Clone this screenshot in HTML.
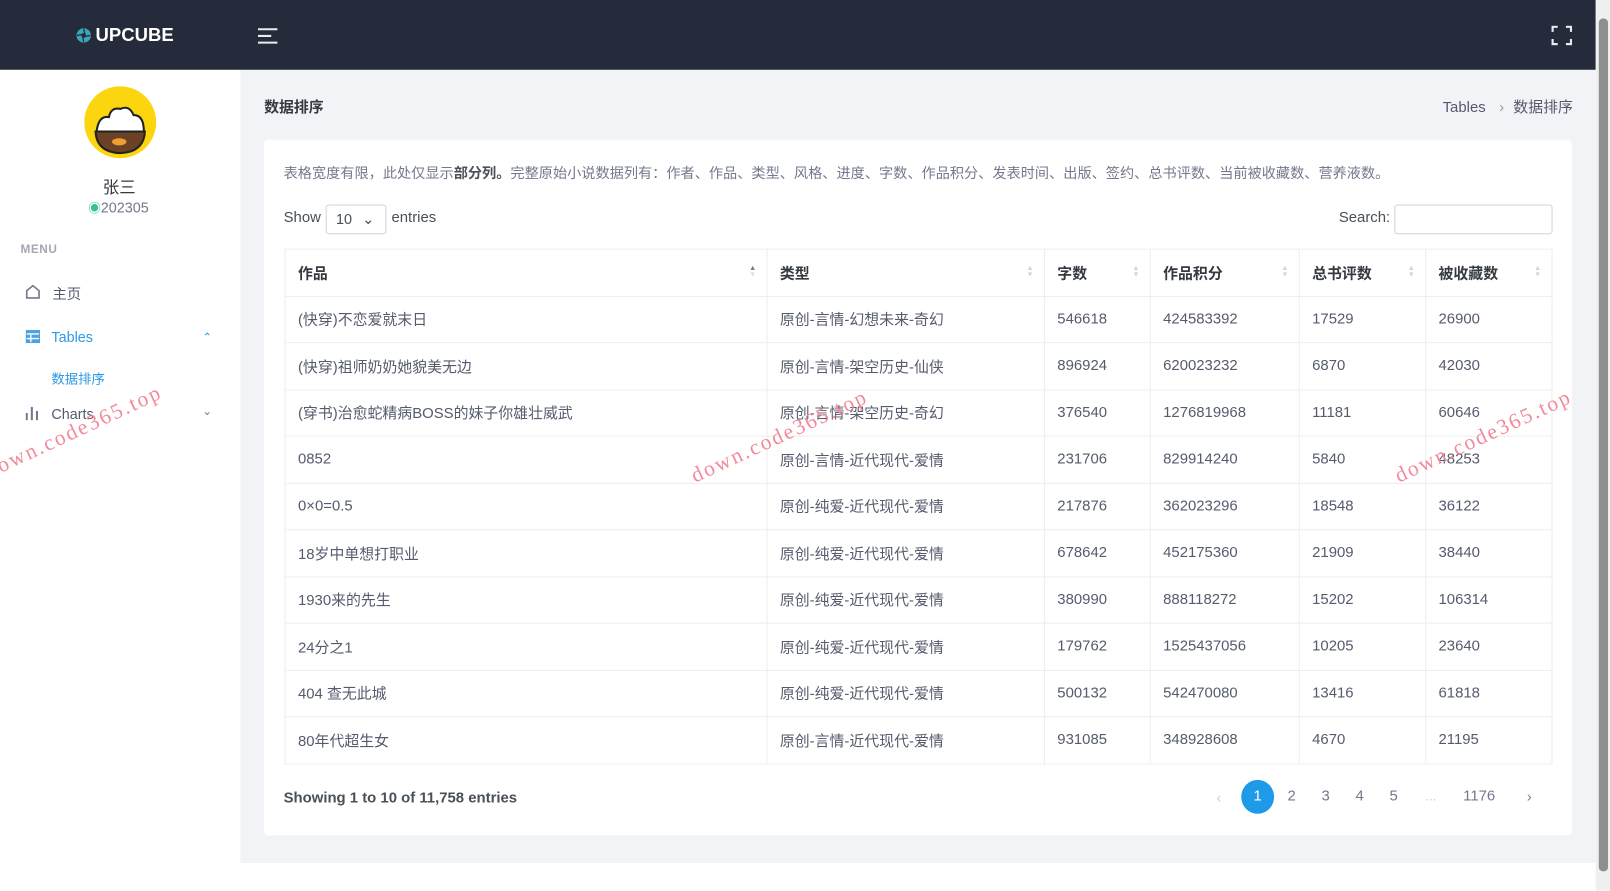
<!DOCTYPE html>
<html><head><meta charset="utf-8"><style>
*{box-sizing:border-box;margin:0;padding:0}
body{width:1610px;height:867px;background:#fff;font-family:"Liberation Sans","Noto Sans CJK SC",sans-serif;overflow:hidden;color:#495057}
#w{position:absolute;left:0;top:0;width:1567px;height:844px;transform:scale(1.0275);transform-origin:0 0}
.hdr{position:absolute;left:0;top:0;width:1553px;height:68px;background:#252b3b}
.side{position:absolute;left:0;top:68px;width:234px;height:799px;background:#fff}
.main{position:absolute;left:234px;top:68px;width:1319px;height:772px;background:#f1f3f7}
.sb{position:absolute;left:1553px;top:0;width:14px;height:867px;background:#f0f0f0}
.sb div{position:absolute;left:3px;top:18px;width:9px;height:830px;background:#8f8f8f;border-radius:4px}
.card{position:absolute;left:257px;top:136px;width:1273px;height:677px;background:#fff;border-radius:4px}
table{position:absolute;left:277px;top:242px;border-collapse:collapse;font-size:14.5px}
td,th{border:1px solid #eceef1;height:45.5px;padding:0 12px;text-align:left;color:#555b6d;font-weight:normal;white-space:nowrap}
th{font-weight:bold;position:relative;color:#343a40}
th span{position:absolute;right:10px;top:16px;font-size:7px;color:#ced4da;line-height:6px}
.t{position:absolute;white-space:nowrap}
.wm{position:absolute;color:#f28a9a;font-family:"Liberation Serif",serif;font-size:21px;transform:rotate(-25deg);letter-spacing:2px;white-space:nowrap}
</style></head><body><div id="w">
<div class="hdr">
 <svg style="position:absolute;left:74px;top:27px" width="15" height="15" viewBox="0 0 16 16"><circle cx="8" cy="8" r="7.5" fill="#3aa6b5"/><circle cx="8" cy="8" r="2.5" fill="#252b3b"/><path d="M8 1L9 6M15 8L10 9M8 15L7 10M1 8L6 7" stroke="#252b3b" stroke-width="1.3"/></svg>
 <div class="t" style="left:93px;top:24px;color:#fff;font-weight:bold;font-size:18px">UPCUBE</div>
 <svg style="position:absolute;left:251px;top:27px" width="20" height="16"><path d="M0 1.5H19M0 8H13M0 14.5H19" stroke="#e9ecef" stroke-width="2"/></svg>
 <svg style="position:absolute;left:1510px;top:25px" width="20" height="19" fill="none" stroke="#e9ecef" stroke-width="2.2"><path d="M1 6V1H6M14 1H19V6M19 13V18H14M6 18H1V13"/></svg>
</div>
<div class="side">
 <svg style="position:absolute;left:82px;top:16px" width="70" height="70" viewBox="0 0 70 70"><circle cx="35" cy="35" r="35" fill="#fbd60e"/><path d="M12 44 Q14 28 24 30 Q26 20 35 22 Q44 18 48 28 Q58 28 58 44Z" fill="#fff" stroke="#222" stroke-width="2"/><path d="M11 44H59Q58 64 35 65Q12 64 11 44Z" fill="#6b4226" stroke="#222" stroke-width="2"/><ellipse cx="34" cy="54" rx="7" ry="3.5" fill="#f0a030"/></svg>
 <div class="t" style="left:100px;top:101px;font-size:16px;color:#343a40">张三</div>
 <div class="t" style="left:86px;top:126px;font-size:14px;color:#74788d"><span style="color:#34c38f;font-size:12px">◉</span>202305</div>
 <div class="t" style="left:20px;top:169px;font-size:11.5px;font-weight:bold;color:#a6a6b4;letter-spacing:.5px">MENU</div>
 <svg style="position:absolute;left:25px;top:209px" width="14" height="14" fill="none" stroke="#74788d" stroke-width="1.6"><path d="M1 6L7 1L13 6V13H1Z"/></svg>
 <div class="t" style="left:51px;top:208px;font-size:14px;color:#545a6d">主页</div>
 <svg style="position:absolute;left:25px;top:253px" width="14" height="13"><rect x="0" y="0" width="14" height="13" fill="#4da3e0"/><path d="M1 4H13M1 8.5H13M5 4V12" stroke="#fff" stroke-width="1.3"/></svg>
 <div class="t" style="left:50px;top:252px;font-size:14px;color:#2f9ae5">Tables</div>
 <div class="t" style="left:197px;top:254px;font-size:11px;color:#2f9ae5">⌃</div>
 <div class="t" style="left:50px;top:290px;font-size:13px;color:#2f9ae5">数据排序</div>
 <svg style="position:absolute;left:25px;top:327px" width="14" height="14"><path d="M1 14V7M6 14V1M11 14V5" stroke="#74788d" stroke-width="2"/></svg>
 <div class="t" style="left:50px;top:327px;font-size:14px;color:#545a6d">Charts</div>
 <div class="t" style="left:197px;top:326px;font-size:11px;color:#74788d">⌄</div>
</div>
<div class="main">
 <div class="t" style="left:23px;top:25px;font-size:14.5px;font-weight:bold;color:#343a40">数据排序</div>
 <div class="t" style="left:1170px;top:25px;font-size:14.5px;color:#545a6d">Tables <span style="margin:0 9px;color:#999">›</span>数据排序</div>
</div>
<div class="sb"><div></div></div>
<div class="card">
 <div class="t" style="left:19px;top:21px;font-size:13.8px;color:#74788d">表格宽度有限，此处仅显示<b style="color:#495057">部分列。</b>完整原始小说数据列有：作者、作品、类型、风格、进度、字数、作品积分、发表时间、出版、签约、总书评数、当前被收藏数、营养液数。</div>
 <div class="t" style="left:19px;top:68px;font-size:14.5px;color:#495057">Show</div>
 <div class="t" style="left:60px;top:63px;width:59px;height:29px;border:1px solid #ced4da;border-radius:3px;font-size:14px;padding:5px 9px">10 <span style="margin-left:6px">⌄</span></div>
 <div class="t" style="left:124px;top:68px;font-size:14.5px">entries</div>
 <div class="t" style="left:1046px;top:68px;font-size:14.5px">Search:</div>
 <div class="t" style="left:1100px;top:63px;width:154px;height:29px;border:1px solid #ced4da;border-radius:3px"></div>
 <div class="t" style="left:19px;top:633px;font-size:14.5px;font-weight:bold;color:#495057">Showing 1 to 10 of 11,758 entries</div>
 <div class="t" style="left:927px;top:632px;font-size:14px;color:#ccc">‹</div>
 <div class="t" style="left:951px;top:623px;width:32px;height:33px;border-radius:50%;background:#1d9be8;color:#fff;font-size:14.5px;text-align:center;line-height:33px">1</div>
 <div class="t" style="left:996px;top:631px;font-size:14.5px;color:#74788d;word-spacing:21px">2 3 4 5</div>
 <div class="t" style="left:1130px;top:631px;font-size:13px;color:#ccc">...</div>
 <div class="t" style="left:1167px;top:631px;font-size:14.5px;color:#74788d">1176</div>
 <div class="t" style="left:1229px;top:631px;font-size:14px;color:#74788d">›</div>
</div>
<table>
<tr><th style="width:469px">作品<span style="color:#777">▲<br><span style="position:static;color:#ddd">▼</span></span></th><th style="width:270px">类型<span>▲<br>▼</span></th><th style="width:103px">字数<span>▲<br>▼</span></th><th style="width:145px">作品积分<span>▲<br>▼</span></th><th style="width:123px">总书评数<span>▲<br>▼</span></th><th style="width:123px">被收藏数<span>▲<br>▼</span></th></tr>
<tr><td>(快穿)不恋爱就末日</td><td>原创-言情-幻想未来-奇幻</td><td>546618</td><td>424583392</td><td>17529</td><td>26900</td></tr>
<tr><td>(快穿)祖师奶奶她貌美无边</td><td>原创-言情-架空历史-仙侠</td><td>896924</td><td>620023232</td><td>6870</td><td>42030</td></tr>
<tr><td>(穿书)治愈蛇精病BOSS的妹子你雄壮威武</td><td>原创-言情-架空历史-奇幻</td><td>376540</td><td>1276819968</td><td>11181</td><td>60646</td></tr>
<tr><td>0852</td><td>原创-言情-近代现代-爱情</td><td>231706</td><td>829914240</td><td>5840</td><td>48253</td></tr>
<tr><td>0×0=0.5</td><td>原创-纯爱-近代现代-爱情</td><td>217876</td><td>362023296</td><td>18548</td><td>36122</td></tr>
<tr><td>18岁中单想打职业</td><td>原创-纯爱-近代现代-爱情</td><td>678642</td><td>452175360</td><td>21909</td><td>38440</td></tr>
<tr><td>1930来的先生</td><td>原创-纯爱-近代现代-爱情</td><td>380990</td><td>888118272</td><td>15202</td><td>106314</td></tr>
<tr><td>24分之1</td><td>原创-纯爱-近代现代-爱情</td><td>179762</td><td>1525437056</td><td>10205</td><td>23640</td></tr>
<tr><td>404 查无此城</td><td>原创-纯爱-近代现代-爱情</td><td>500132</td><td>542470080</td><td>13416</td><td>61818</td></tr>
<tr><td>80年代超生女</td><td>原创-言情-近代现代-爱情</td><td>931085</td><td>348928608</td><td>4670</td><td>21195</td></tr>
</table>
<div class="wm" style="left:-10px;top:405px">own.code365.top</div>
<div class="wm" style="left:665px;top:412px">down.code365.top</div>
<div class="wm" style="left:1350px;top:412px">down.code365.top</div>
</div></body></html>
